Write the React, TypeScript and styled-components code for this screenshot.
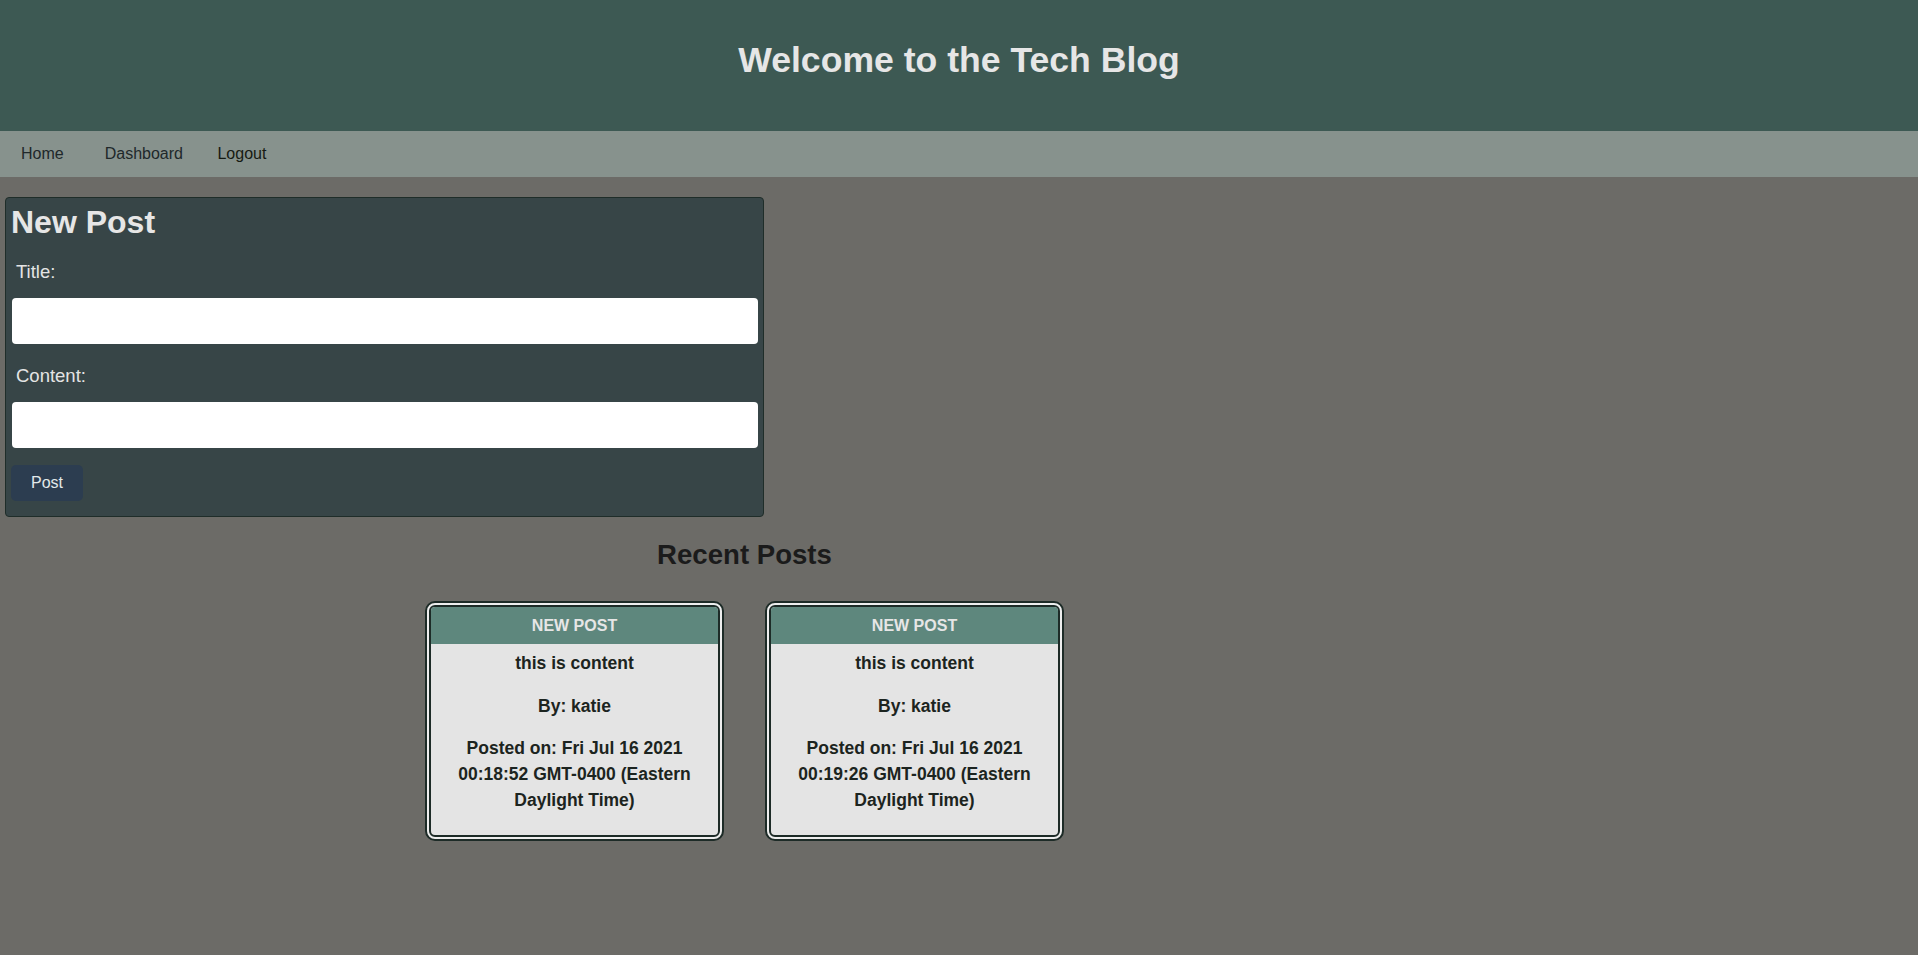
import React from "react";
import styled, { createGlobalStyle } from "styled-components";

const GlobalStyle = createGlobalStyle`
  html, body {
    margin: 0;
    padding: 0;
    background: #6c6b67;
    font-family: "Liberation Sans", Arial, sans-serif;
  }
  * { box-sizing: border-box; }
`;

const Header = styled.header`
  height: 131px;
  background: #3d5953;
  display: flex;
  align-items: center;
  justify-content: center;
  padding-bottom: 10px;
`;

const SiteTitle = styled.h1`
  margin: 0;
  font-size: 35.6px;
  font-weight: 700;
  color: #e6e6e6;
`;

const Nav = styled.nav`
  height: 46px;
  background: #87928d;
  display: flex;
  align-items: center;
`;

const NavLink = styled.a<{ $dark?: boolean }>`
  font-size: 16px;
  color: ${(p) => (p.$dark ? "#161a12" : "#20282a")};
  text-decoration: none;
  padding: 0 20.5px;
  cursor: pointer;
  &:first-child { padding-left: 21px; }
`;

const LogoutLink = styled(NavLink)`
  padding-left: 14px;
`;

const Main = styled.main`
  padding: 20px 0 40px 5px;
`;

const Panel = styled.form`
  width: 759px;
  background: #374547;
  border: 1px solid #1f2d29;
  border-radius: 4px;
  padding: 6px 5px 15px 5px;
  display: flex;
  flex-direction: column;
  align-items: flex-start;
`;

const PanelTitle = styled.h2`
  margin: 0;
  font-size: 32px;
  line-height: 37px;
  font-weight: 700;
  color: #e6e6e6;
`;

const Label = styled.label<{ $top: number }>`
  display: block;
  margin-top: ${(p) => p.$top}px;
  padding-left: 5px;
  font-size: 18.5px;
  line-height: 21px;
  color: #e4e4e4;
`;

const TextInput = styled.input`
  display: block;
  width: calc(100% - 1px);
  margin: 16px 0 0 1px;
  height: 46px;
  border: none;
  border-radius: 4px;
  background: #ffffff;
  outline: none;
  font-size: 16px;
  padding: 0 10px;
`;

const PostButton = styled.button`
  margin-top: 17px;
  width: 72px;
  height: 36px;
  border: none;
  border-radius: 5px;
  background: #2c3d50;
  color: #e2e9ea;
  font-family: "Liberation Sans", Arial, sans-serif;
  font-size: 16px;
  cursor: pointer;
`;

const Recent = styled.section`
  width: 1479px;
  margin-top: 22px;
  display: flex;
  flex-direction: column;
  align-items: center;
`;

const RecentTitle = styled.h2`
  margin: 0;
  font-size: 27.6px;
  line-height: 31px;
  font-weight: 700;
  color: #1b1b1b;
`;

const CardRow = styled.div`
  margin-top: 31px;
  display: flex;
  justify-content: center;
  gap: 41px;
`;

const Card = styled.article`
  width: 299px;
  flex: 0 0 299px;
  border: 2px solid #1d2b27;
  border-radius: 10px;
  padding: 2px;
  background: #eeeeee;
`;

const CardInner = styled.div`
  border: 2px solid #1d2b27;
  border-radius: 6px;
  overflow: hidden;
  background: #e4e4e4;
`;

const CardHeader = styled.div`
  height: 37px;
  background: #5e877d;
  color: #e6e6e6;
  font-size: 16px;
  font-weight: 700;
  display: flex;
  align-items: center;
  justify-content: center;
  padding-top: 1px;
`;

const CardBody = styled.div`
  padding: 6px 14px 5px;
  text-align: center;
`;

const CardText = styled.p`
  margin: 0 0 16.5px;
  font-size: 17.5px;
  line-height: 26px;
  font-weight: 700;
  color: #1c2420;
`;

const posts = [
  {
    title: "NEW POST",
    content: "this is content",
    author: "katie",
    date: "Fri Jul 16 2021 00:18:52 GMT-0400 (Eastern Daylight Time)",
  },
  {
    title: "NEW POST",
    content: "this is content",
    author: "katie",
    date: "Fri Jul 16 2021 00:19:26 GMT-0400 (Eastern Daylight Time)",
  },
];

export default function App() {
  return (
    <>
      <GlobalStyle />
      <Header>
        <SiteTitle>Welcome to the Tech Blog</SiteTitle>
      </Header>
      <Nav>
        <NavLink>Home</NavLink>
        <NavLink>Dashboard</NavLink>
        <LogoutLink $dark>Logout</LogoutLink>
      </Nav>
      <Main>
        <Panel onSubmit={(e) => e.preventDefault()}>
          <PanelTitle>New Post</PanelTitle>
          <Label $top={20} htmlFor="title">Title:</Label>
          <TextInput id="title" type="text" />
          <Label $top={21} htmlFor="content">Content:</Label>
          <TextInput id="content" type="text" />
          <PostButton type="submit">Post</PostButton>
        </Panel>
        <Recent>
          <RecentTitle>Recent Posts</RecentTitle>
          <CardRow>
            {posts.map((p, i) => (
              <Card key={i}>
                <CardInner>
                  <CardHeader>{p.title}</CardHeader>
                  <CardBody>
                    <CardText>{p.content}</CardText>
                    <CardText>By: {p.author}</CardText>
                    <CardText>Posted on: {p.date}</CardText>
                  </CardBody>
                </CardInner>
              </Card>
            ))}
          </CardRow>
        </Recent>
      </Main>
    </>
  );
}
